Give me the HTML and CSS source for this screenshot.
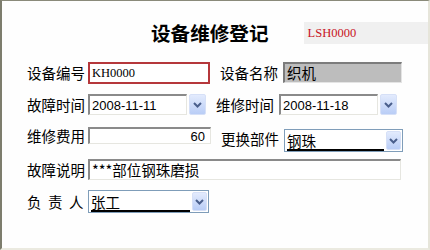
FILE: index.html
```html
<!DOCTYPE html>
<html lang="zh-CN">
<head>
<meta charset="utf-8">
<title>设备维修登记</title>
<link rel="stylesheet" href="styles.css">
</head>
<body>
<div class="frame">
  <div class="header">
    <div class="title">设备维修登记</div>
    <div class="code-box"><span class="code">LSH0000</span></div>
  </div>

  <div class="row row1">
    <span class="label">设备编号</span>
    <div class="field red-box w-left"><span class="serif">KH0000</span></div>
    <span class="label label-r">设备名称</span>
    <div class="field gray-box w-right"><span class="cjk">织机</span></div>
  </div>

  <div class="row row2">
    <span class="label">故障时间</span>
    <div class="date">
      <div class="field sunken date-in"><span class="sans">2008-11-11</span></div>
      <div class="drop"><svg width="9" height="6" viewBox="0 0 9 6"><path d="M1 1 L4.5 4.5 L8 1" fill="none" stroke="#4a5f8c" stroke-width="2"/></svg></div>
    </div>
    <span class="label label-r">维修时间</span>
    <div class="date">
      <div class="field sunken date-in"><span class="sans">2008-11-18</span></div>
      <div class="drop"><svg width="9" height="6" viewBox="0 0 9 6"><path d="M1 1 L4.5 4.5 L8 1" fill="none" stroke="#4a5f8c" stroke-width="2"/></svg></div>
    </div>
  </div>

  <div class="row row3">
    <span class="label">维修费用</span>
    <div class="field sunken fee"><span class="sans">60</span></div>
    <span class="label label-r part-label">更换部件</span>
    <div class="combo w-right part">
      <span class="combo-text cjk">钢珠</span>
      <div class="drop drop-c"><svg width="9" height="6" viewBox="0 0 9 6"><path d="M1 1 L4.5 4.5 L8 1" fill="none" stroke="#4a5f8c" stroke-width="2"/></svg></div>
    </div>
  </div>

  <div class="row row4">
    <span class="label">故障说明</span>
    <div class="field sunken desc"><span class="cjk">***部位钢珠磨损</span></div>
  </div>

  <div class="row row5">
    <span class="label spaced">负责人</span>
    <div class="combo person">
      <span class="combo-text cjk">张工</span>
      <div class="drop drop-c"><svg width="9" height="6" viewBox="0 0 9 6"><path d="M1 1 L4.5 4.5 L8 1" fill="none" stroke="#4a5f8c" stroke-width="2"/></svg></div>
    </div>
  </div>
</div>
</body>
</html>
```

FILE: styles.css
```css
html, body {
  margin: 0;
  padding: 0;
  background: #ffffff;
}

.frame {
  width: 430px;
  height: 250px;
  box-sizing: border-box;
  border-left: 2px solid #7d7d6d;
  border-top: 1px solid #8a8a7a;
  border-right: 2px solid #e6e5da;
  border-bottom: 2px solid #ebeae0;
  background: #fefefe;
  font-family: "Noto Sans CJK SC", sans-serif;
  color: #000;
}

.header {
  display: flex;
  align-items: center;
  margin-top: 21px;
  height: 22px;
}

.title {
  margin-left: 149px;
  font-size: 19.6px;
  font-weight: bold;
  line-height: 22px;
  letter-spacing: 0;
}

.code-box {
  margin-left: 35px;
  flex: 1;
  height: 22px;
  background: #f0f0f0;
  display: flex;
  align-items: center;
  padding-left: 4px;
}

.code {
  font-family: "Liberation Serif", serif;
  font-size: 12.5px;
  color: #c8141e;
}

.row {
  display: flex;
  align-items: center;
  padding-left: 25px;
}

.row1 { margin-top: 18px; height: 22px; }
.row2 { margin-top: 10px; height: 21px; }
.row3 { margin-top: 12px; height: 24px; align-items: flex-start; }
.row4 { margin-top: 8px; height: 21px; }
.row5 { margin-top: 10px; height: 23px; }

.label {
  width: 61px;
  font-size: 14.5px;
  line-height: 18px;
  white-space: nowrap;
}

.label-r {
  width: 63px;
  margin-left: 10px;
}

.spaced {
  letter-spacing: 6.5px;
}

.field {
  box-sizing: border-box;
  display: flex;
  align-items: center;
  padding-left: 2px;
  overflow: hidden;
  white-space: nowrap;
}

.serif {
  font-family: "Liberation Serif", serif;
  font-size: 12.5px;
}

.sans {
  font-family: "Liberation Sans", sans-serif;
  font-size: 13px;
}

.cjk {
  font-size: 14.5px;
  line-height: 18px;
}

.red-box {
  height: 22px;
  border: 2px solid #b5373b;
  background: #ffffff;
}

.w-left { width: 122px; }
.w-right { width: 119px; }

.gray-box {
  height: 21px;
  margin-top: -2px;
  background: #bdbdbd;
  border-style: solid;
  border-width: 2px 1px 1px 2px;
  border-color: #7c7c7c #e4e4e4 #e4e4e4 #7c7c7c;
}

.sunken {
  background: #ffffff;
  border-style: solid;
  border-width: 2px 1px 1px 2px;
  border-color: #8a8a8a #e6e6e0 #e6e6e0 #8a8a8a;
}

.date {
  display: flex;
  align-items: center;
  gap: 2px;
}

.date-in {
  width: 99px;
  height: 21px;
}

.drop {
  box-sizing: border-box;
  width: 17px;
  height: 21px;
  border: 1px solid #d6e0f7;
  border-radius: 2px;
  background: linear-gradient(#e3ebfd, #b9cdf6);
  display: flex;
  align-items: center;
  justify-content: center;
}

.fee {
  width: 123px;
  height: 17px;
  justify-content: flex-end;
  padding-right: 5px;
}

.part-label {
  margin-top: 3px;
}

.part {
  margin-top: 2px;
}

.combo {
  box-sizing: border-box;
  height: 23px;
  border: 1px solid #7f9db9;
  background: #ffffff;
  display: flex;
  align-items: center;
  padding: 0 1px 0 2px;
  gap: 2px;
}

.combo-text {
  flex: 1;
  border-bottom: 2px solid #000;
  line-height: 17px;
  margin-top: 1px;
}

.drop-c {
  width: 15px;
  height: 19px;
}

.desc {
  width: 313px;
  height: 21px;
}

.person {
  width: 121px;
}
```
